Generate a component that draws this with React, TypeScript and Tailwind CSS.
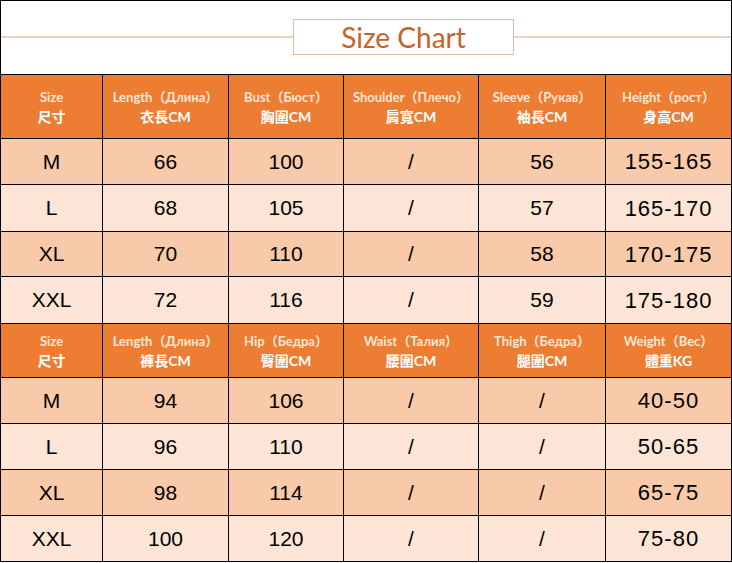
const topHeaders = [
	["Size", "尺寸"],
	["Length（Длина）", "衣長CM"],
	["Bust（Бюст）", "胸圍CM"],
	["Shoulder（Плечо）", "肩寬CM"],
	["Sleeve（Рукав）", "袖長CM"],
	["Height（рост）", "身高CM"],
];

const bottomHeaders = [
	["Size", "尺寸"],
	["Length（Длина）", "褲長CM"],
	["Hip（Бедра）", "臀圍CM"],
	["Waist（Талия）", "腰圍CM"],
	["Thigh（Бедра）", "腿圍CM"],
	["Weight（Вес）", "體重KG"],
];

const topRows = [
	["M", "66", "100", "/", "56", "155-165"],
	["L", "68", "105", "/", "57", "165-170"],
	["XL", "70", "110", "/", "58", "170-175"],
	["XXL", "72", "116", "/", "59", "175-180"],
];

const bottomRows = [
	["M", "94", "106", "/", "/", "40-50"],
	["L", "96", "110", "/", "/", "50-65"],
	["XL", "98", "114", "/", "/", "65-75"],
	["XXL", "100", "120", "/", "/", "75-80"],
];

const HeaderRow = ({ cells }: { cells: string[][] }) => (
	<>
		{cells.map(([en, zh], i) => (
			<div
				key={i}
				className="flex flex-col items-center justify-center bg-[#ec7d33] font-bold leading-[19px]"
			>
				<span className="text-[13px] text-[#fde6d5] font-['Lato','Noto_Sans_CJK_SC',sans-serif]">
					{en}
				</span>
				<span className="text-[14px] text-white font-['Lato','Noto_Sans_CJK_TC',sans-serif]">
					{zh}
				</span>
			</div>
		))}
	</>
);

const DataRow = ({ cells, dark }: { cells: string[]; dark: boolean }) => (
	<>
		{cells.map((v, i) => (
			<div
				key={i}
				className={`flex items-center justify-center text-black ${
					dark ? "bg-[#f8caaa]" : "bg-[#fce5d7]"
				} ${i === 5 ? "text-[22px] tracking-[1px]" : "text-[21px]"}`}
			>
				{v}
			</div>
		))}
	</>
);

export default function App() {
	return (
		<div className="w-[732px] h-[563px] bg-white font-['Liberation_Sans',Arial,sans-serif]">
			<div className="h-[74px] border-t border-l border-r border-black flex items-center pb-[2px]">
				<div className="w-[292px] h-[2px] bg-[#f0d3bd]" />
				<div className="w-[221px] h-[36px] border border-[#e3bd9f] bg-white flex items-center justify-center">
					<span className="text-[28px] leading-none text-[#c4632b] font-['Lato',sans-serif] pt-px">
						Size Chart
					</span>
				</div>
				<div className="flex-1 h-[2px] bg-[#f0d3bd]" />
			</div>
			<div className="grid grid-cols-[101px_125px_114px_134px_126px_125px] grid-rows-[63px_45px_46px_44px_46px_53px_45px_45px_45px_45px] gap-px bg-black p-px">
				<HeaderRow cells={topHeaders} />
				{topRows.map((r, i) => (
					<DataRow key={i} cells={r} dark={i % 2 === 0} />
				))}
				<HeaderRow cells={bottomHeaders} />
				{bottomRows.map((r, i) => (
					<DataRow key={i} cells={r} dark={i % 2 === 0} />
				))}
			</div>
		</div>
	);
}
